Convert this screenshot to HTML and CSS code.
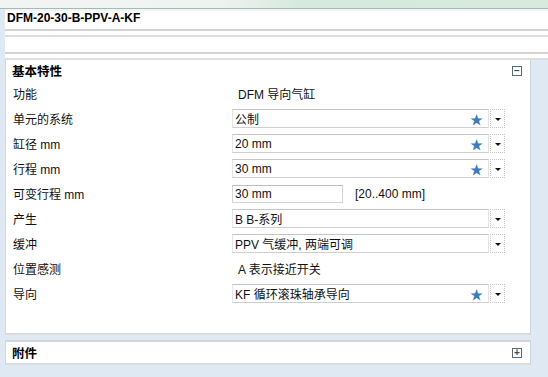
FILE: index.html
```html
<!DOCTYPE html>
<html lang="zh">
<head>
    <meta charset="UTF-8">
    <title>DFM-20-30-B-PPV-A-KF</title>
    <link rel="stylesheet" href="styles.css">
</head>
<body>
<div class="topstrip"></div>
<div class="title-bar">DFM-20-30-B-PPV-A-KF</div>
<div class="sep"></div>
<div class="blank-bar"></div>
<div class="sep"></div>

<div class="panel">
    <div class="panel-head">
        <span>基本特性</span>
        <span class="toggle">&minus;</span>
    </div>
    <div class="rows">
        <div class="row">
            <div class="label">功能</div>
            <div class="text-value">DFM 导向气缸</div>
        </div>
        <div class="row">
            <div class="label">单元的系统</div>
            <div class="select"><span>公制</span><span class="star">&#9733;</span></div>
            <div class="drop"></div>
        </div>
        <div class="row">
            <div class="label">缸径 mm</div>
            <div class="select"><span>20 mm</span><span class="star">&#9733;</span></div>
            <div class="drop"></div>
        </div>
        <div class="row">
            <div class="label">行程 mm</div>
            <div class="select"><span>30 mm</span><span class="star">&#9733;</span></div>
            <div class="drop"></div>
        </div>
        <div class="row">
            <div class="label">可变行程 mm</div>
            <div class="input">30 mm</div>
            <div class="range">[20..400 mm]</div>
        </div>
        <div class="row">
            <div class="label">产生</div>
            <div class="select"><span>B B-系列</span></div>
            <div class="drop"></div>
        </div>
        <div class="row">
            <div class="label">缓冲</div>
            <div class="select"><span>PPV 气缓冲, 两端可调</span></div>
            <div class="drop"></div>
        </div>
        <div class="row">
            <div class="label">位置感测</div>
            <div class="text-value">A 表示接近开关</div>
        </div>
        <div class="row">
            <div class="label">导向</div>
            <div class="select"><span>KF 循环滚珠轴承导向</span><span class="star">&#9733;</span></div>
            <div class="drop"></div>
        </div>
    </div>
</div>

<div class="panel panel-closed">
    <div class="panel-head">
        <span>附件</span>
        <span class="toggle">+</span>
    </div>
</div>
</body>
</html>
```

FILE: styles.css
```css
body {
    margin: 0;
    background-color: #dfe9f3;
    font-family: "Liberation Sans", Tahoma, "Noto Sans CJK SC", sans-serif;
    font-size: 12px;
    color: #111;
}
.topstrip {
    height: 8px;
    background: linear-gradient(to right, #f2f4f4 0%, #eef3f0 40%, #d6e9de 55%, #d8eade 100%);
    border-bottom: 1px solid #a9b8b0;
}
.title-bar {
    margin-left: 5px;
    height: 18px;
    line-height: 15px;
    padding-left: 2px;
    background-color: #fff;
    border-top: 2px solid #eef8fa;
    font-weight: bold;
    font-size: 12px;
    color: #000;
}
.sep {
    height: 4px;
    margin-left: 5px;
    background-color: #fff;
    border-top: 2px solid #d4d4d4;
    border-bottom: 2px solid #dedede;
}
.blank-bar {
    margin-left: 5px;
    height: 15px;
    background-color: #fff;
}
.panel {
    margin: 0 17px 0 5px;
    background-color: #fff;
    border-left: 1px solid #d6d6d6;
    border-right: 1px solid #c9d3dc;
    border-bottom: 2px solid #dcdcdc;
}
.panel-head {
    display: flex;
    justify-content: space-between;
    align-items: center;
    height: 21px;
    padding: 0 8px 0 6px;
    font-weight: bold;
    font-size: 12.5px;
    color: #000;
}
.toggle {
    width: 8px;
    height: 8px;
    border: 1px solid #4f6f80;
    font-size: 10px;
    line-height: 8px;
    text-align: center;
    font-weight: bold;
    color: #34505e;
}
.rows {
    padding: 0 0 27px 0;
}
.row {
    display: flex;
    align-items: center;
    height: 25px;
}
.label {
    width: 219px;
    padding-left: 7px;
}
.text-value {
    padding-left: 6px;
}
.select {
    display: flex;
    justify-content: space-between;
    align-items: center;
    width: 253px;
    height: 17px;
    padding-left: 2px;
    border: 1px solid #e4e4e4;
    border-top: 1px solid #c4c4c4;
    border-bottom: 1px solid #cfcfcf;
}
.star {
    color: #3a7cc0;
    font-size: 13px;
    padding-right: 5px;
}
.drop {
    position: relative;
    width: 13px;
    height: 17px;
    margin-left: 1px;
    border: 1px dotted #c6c6c6;
}
.drop::after {
    content: "";
    position: absolute;
    left: 4px;
    top: 8px;
    border-left: 3px solid transparent;
    border-right: 3px solid transparent;
    border-top: 3px solid #111;
}
.input {
    width: 107px;
    height: 16px;
    line-height: 16px;
    padding-left: 2px;
    border: 1px solid #d4d4d4;
    border-top-color: #bdbdbd;
}
.range {
    margin-left: 12px;
}
.panel-closed {
    margin-top: 5px;
    border-top: 2px solid #d4d4d4;
}
.panel-closed .panel-head {
    height: 21px;
}
```
